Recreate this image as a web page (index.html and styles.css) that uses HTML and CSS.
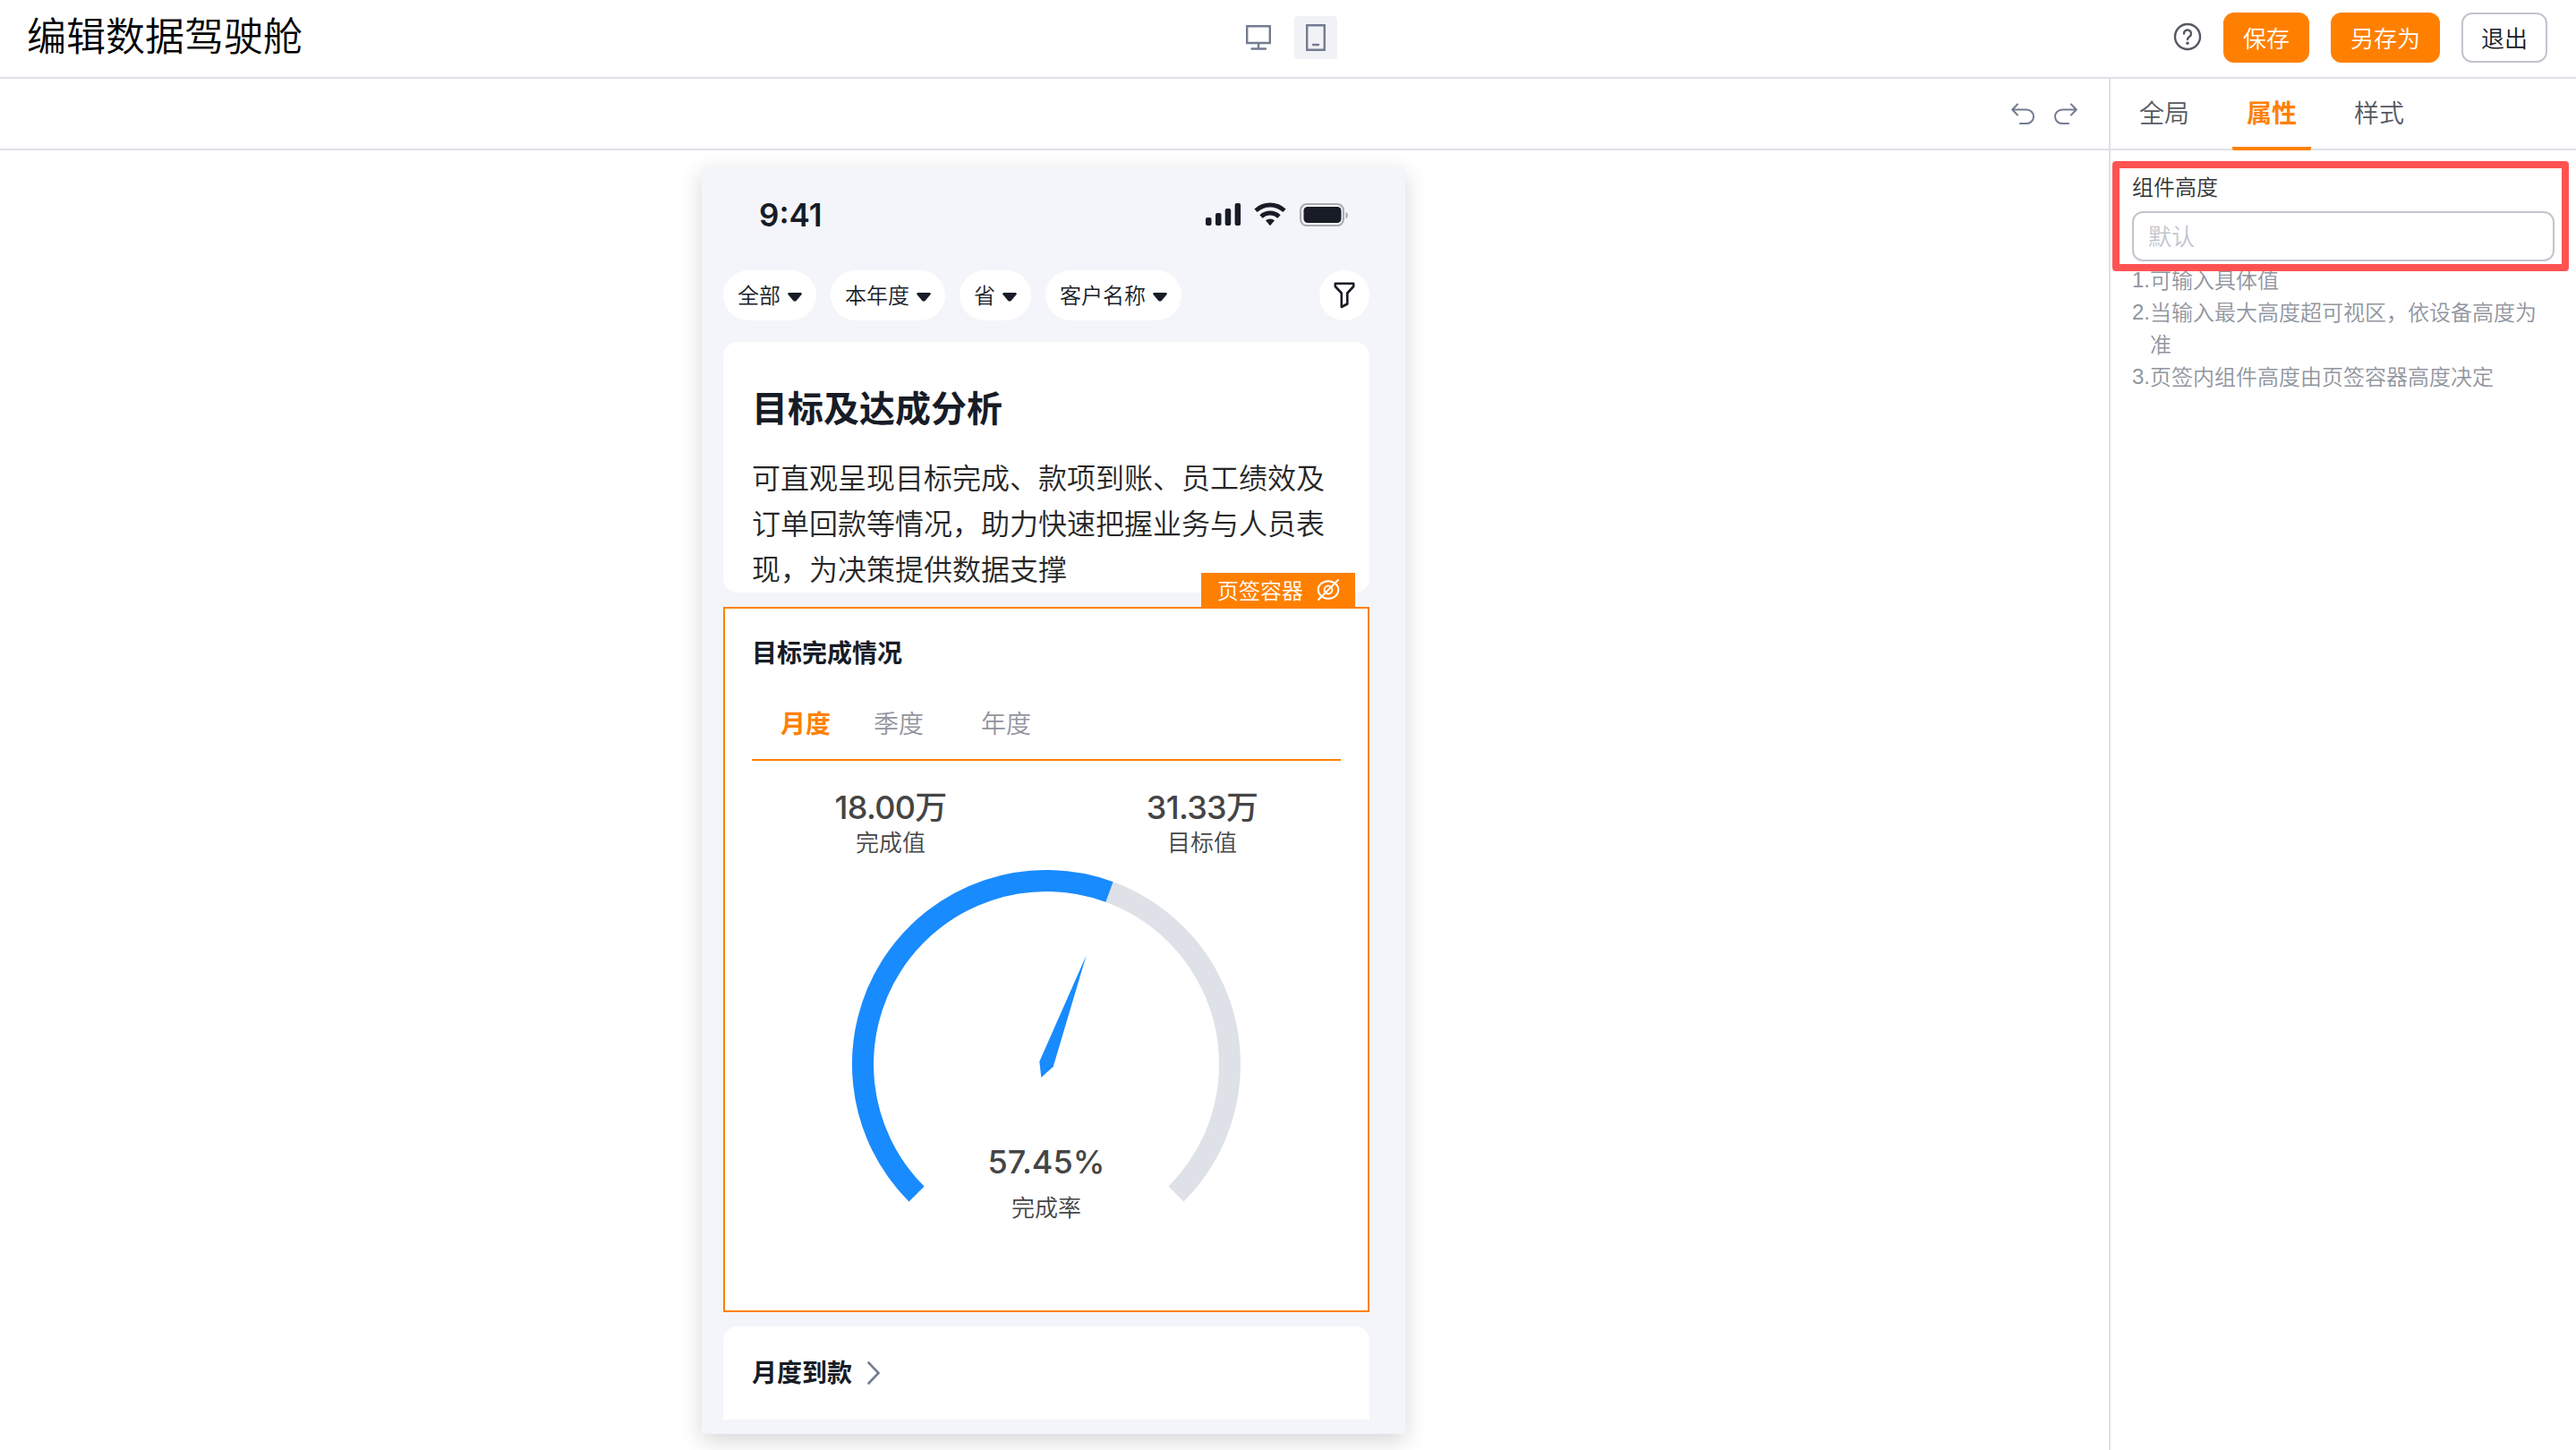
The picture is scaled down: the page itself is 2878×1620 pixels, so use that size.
FILE: index.html
```
<!DOCTYPE html>
<html lang="zh-CN">
<head>
<meta charset="UTF-8">
<title>编辑数据驾驶舱</title>
<link rel="stylesheet" href="styles.css">
</head>
<body>
<div class="header">
    <h1 class="title">编辑数据驾驶舱</h1>
    <div class="devices">
        <span class="device">
            <svg width="28" height="28" viewBox="0 0 28 28" fill="none" stroke="#737c91" stroke-width="2.4"><path d="M1.2 1.2H26.8V20H1.2ZM14 20V26M6.5 26.5H22" stroke-linecap="round"/></svg>
        </span>
        <span class="device on">
            <svg width="22" height="30" viewBox="0 0 22 30" fill="none" stroke="#737c91" stroke-width="2.4"><path d="M1.2 1.2H20.8V28.8H1.2Z"/><path d="M8 23H14" stroke-linecap="round"/></svg>
        </span>
    </div>
    <div class="actions">
        <svg class="help" width="32" height="32" viewBox="0 0 32 32" fill="none" stroke="#545861" stroke-width="2.4" stroke-linecap="round"><circle cx="16" cy="16" r="14"/><path d="M12 12.5a4 4 0 1 1 6.4 3.2c-1.6 1.1-2.4 1.8-2.4 3.3"/><circle cx="16" cy="23.2" r="1.7" fill="#545861" stroke="none"/></svg>
        <button class="btn primary">保存</button>
        <button class="btn primary">另存为</button>
        <button class="btn">退出</button>
    </div>
</div>
<div class="main">
    <div class="stage">
        <div class="toolbar">
            <svg width="26" height="24" viewBox="0 0 26 24" fill="none" stroke="#737c91" stroke-width="2" stroke-linecap="round" stroke-linejoin="round"><path d="M7 1.5L1.2 7.5L7 13.5M1.5 7.5H17a8 7.8 0 0 1 0 15.6H10"/></svg>
            <svg width="26" height="24" viewBox="0 0 26 24" fill="none" stroke="#737c91" stroke-width="2" stroke-linecap="round" stroke-linejoin="round"><path d="M19 1.5L24.8 7.5L19 13.5M24.5 7.5H9a8 7.8 0 0 0 0 15.6H16"/></svg>
        </div>
        <div class="canvas">
            <div class="phone">
                <div class="status">
                    <span class="time">9:41</span>
                    <svg width="162" height="28" viewBox="0 0 162 28" fill="#171c26">
                        <rect x="1" y="17" width="6.5" height="9" rx="2"/>
                        <rect x="12" y="12" width="6.5" height="14" rx="2"/>
                        <rect x="22.7" y="7" width="6.5" height="19" rx="2"/>
                        <rect x="33.6" y="1" width="6.5" height="25" rx="2"/>
                        <g fill="none" stroke="#171c26" stroke-width="4.8"><path d="M57 9.3a23.5 23.5 0 0 1 32 0"/><path d="M63 16a14.5 14.5 0 0 1 20 0"/></g>
                        <path d="M68 20.3a7.5 7.5 0 0 1 10 0L73 26.2Z"/>
                        <rect x="107" y="2" width="48" height="24" rx="7" fill="none" stroke="#a8abb2" stroke-width="2"/>
                        <rect x="110.5" y="5" width="42" height="18" rx="4.5"/>
                        <path d="M157.5 10.5v8a4.5 4.5 0 0 0 0-8z" fill="#a8abb2"/>
                    </svg>
                </div>
                <div class="filters">
                    <span class="pill">全部<i class="caret"></i></span>
                    <span class="pill">本年度<i class="caret"></i></span>
                    <span class="pill">省<i class="caret"></i></span>
                    <span class="pill">客户名称<i class="caret"></i></span>
                    <span class="funnel">
                        <svg width="24" height="30" viewBox="0 0 24 30" fill="none" stroke="#171c26" stroke-width="2.6" stroke-linejoin="round"><path d="M1.8 1.8H22.2V5L15.3 12.5V24.5L8.8 28V12.5L1.8 5Z"/></svg>
                    </span>
                </div>
                <div class="card intro">
                    <h2>目标及达成分析</h2>
                    <p>可直观呈现目标完成、款项到账、员工绩效及订单回款等情况，助力快速把握业务与人员表现，为决策提供数据支撑</p>
                </div>
                <div class="selected">
                    <div class="tag">页签容器
                        <svg width="26" height="26" viewBox="0 0 26 26" fill="none" stroke="#fff" stroke-width="2" stroke-linecap="round"><ellipse cx="13" cy="13" rx="11.3" ry="9.8"/><circle cx="13" cy="13" r="4.4"/><path d="M24 2L2 24"/></svg>
                    </div>
                    <h3>目标完成情况</h3>
                    <div class="periods">
                        <span class="on">月度</span>
                        <span>季度</span>
                        <span>年度</span>
                    </div>
                    <div class="values">
                        <div class="value"><b>18.00<em>万</em></b><span>完成值</span></div>
                        <div class="value"><b>31.33<em>万</em></b><span>目标值</span></div>
                    </div>
                    <div class="gauge">
                        <svg width="434" height="372" viewBox="0 0 434 372" fill="none" stroke-width="24">
                            <path d="M72.04 361.96A205 205 0 1 1 361.96 361.96" stroke="#dee1e8"/>
                            <path d="M72.04 361.96A205 205 0 0 1 287.45 24.49" stroke="#188bff"/>
                            <path d="M261.7 95.3L224.7 219.7L211.3 231.7L209.3 214Z" fill="#188bff" stroke="none"/>
                        </svg>
                        <div class="rate"><b>57.45%</b><span>完成率</span></div>
                    </div>
                </div>
                <div class="card next">
                    <h3>月度到款</h3>
                    <svg width="16" height="28" viewBox="0 0 16 28" fill="none" stroke="#737c91" stroke-width="2.6" stroke-linecap="round"><path d="M2.5 2.5L13.5 14L2.5 25.5"/></svg>
                </div>
            </div>
        </div>
    </div>
    <div class="panel">
        <div class="tabs">
            <span class="tab">全局</span>
            <span class="tab on">属性</span>
            <span class="tab">样式</span>
        </div>
        <div class="props">
            <div class="field">
                <label>组件高度</label>
                <input type="text" placeholder="默认">
            </div>
            <ul class="notes">
                <li><i>1.</i><span>可输入具体值</span></li>
                <li><i>2.</i><span>当输入最大高度超可视区，依设备高度为准</span></li>
                <li><i>3.</i><span>页签内组件高度由页签容器高度决定</span></li>
            </ul>
            <div class="mark"></div>
        </div>
    </div>
</div>
</body>
</html>
```
FILE: styles.css
```
* {
box-sizing: border-box;
}
body {
margin: 0;
width: 2878px;
height: 1620px;
overflow: hidden;
background: #fff;
color: #171c26;
font-family: "Noto Sans CJK SC", sans-serif;
font-weight: 350;
}
h1, h2, h3, p, ul {
margin: 0;
padding: 0;
}
i, em {
font-style: normal;
}
svg {
display: block;
flex: none;
}

/* header */
.header {
display: grid;
grid-template-columns: 1fr auto 1fr;
height: 88px;
padding: 0 32px 2px 30px;
border-bottom: 2px solid #dee1e6;
align-items: center;
}
.title {
font-size: 44px;
font-weight: 350;
line-height: 60px;
color: #000;
margin-top: -8px;
}
.devices {
display: flex;
gap: 16px;
margin: 0 1px 0 0;
}
.device {
display: flex;
width: 48px;
height: 48px;
border-radius: 4px;
align-items: center;
justify-content: center;
}
.device.on {
background: #f1f2f5;
}
.actions {
display: flex;
justify-content: flex-end;
align-items: center;
gap: 24px;
}
.help {
margin: -2px 0 0;
}
.btn {
height: 56px;
padding: 0 20px;
border: 2px solid #c1c5ce;
border-radius: 12px;
background: #fff;
color: #171c26;
font: 350 26px/48px "Noto Sans CJK SC", sans-serif;
width: 96px;
}
.btn.primary {
width: auto;
padding: 0 20px;
border-color: #ff8000;
background: #ff8000;
color: #fff;
}

/* left stage */
.main {
display: flex;
height: 1532px;
}
.stage {
flex: 1;
}
.toolbar {
display: flex;
height: 80px;
padding: 0 35px 0 0;
gap: 22px;
justify-content: flex-end;
align-items: center;
border-bottom: 2px solid #dee1e6;
}
.canvas {
display: flex;
justify-content: center;
padding: 18px 2px 0 0;
height: 1452px;
overflow: hidden;
}
.phone {
width: 786px;
height: 1416px;
padding: 0 40px 0 24px;
background: #f4f5fa;
box-shadow: 0 8px 24px rgba(0, 0, 0, 0.16);
}
.status {
display: flex;
justify-content: space-between;
align-items: center;
height: 108px;
padding: 0 22px 0 40px;
margin-bottom: 8px;
}
.time {
font: 600 35px/40px Inter, sans-serif;
}
.filters {
display: flex;
gap: 16px;
margin-bottom: 24px;
}
.pill {
display: flex;
align-items: center;
gap: 8px;
height: 56px;
padding: 0 16px 2px;
border-radius: 28px;
background: #fff;
font-size: 24px;
line-height: 50px;
}
.caret {
width: 16px;
height: 10px;
margin-top: 6px;
background: #171c26;
clip-path: polygon(6% 0, 94% 0, 100% 14%, 58% 95%, 42% 95%, 0 14%);
}
.funnel {
display: flex;
align-items: center;
justify-content: center;
width: 56px;
height: 56px;
margin-left: auto;
border-radius: 50%;
background: #fff;
}
.card {
background: #fff;
border-radius: 16px;
padding: 0 32px;
}
.intro {
height: 280px;
padding-top: 42px;
margin-bottom: 16px;
}
.intro h2 {
font-size: 40px;
font-weight: 600;
line-height: 60px;
margin-bottom: 23px;
}
.intro p {
font-size: 32px;
line-height: 51px;
color: #262626;
}

/* selected tab container */
.selected {
position: relative;
height: 788px;
padding: 28px 30px 0;
margin-bottom: 16px;
border: 2px solid #ff8000;
background: #fff;
}
.tag {
position: absolute;
right: 14px;
top: -40px;
display: flex;
align-items: center;
justify-content: space-between;
width: 172px;
height: 38px;
padding: 0 17px 0 18px;
background: #ff8000;
color: #fff;
font-size: 24px;
line-height: 34px;
}
h3 {
font-size: 28px;
font-weight: 600;
line-height: 40px;
}
.periods {
display: flex;
margin-top: 32px;
padding: 5px 32px 0;
height: 70px;
border-bottom: 2px solid #ff8000;
color: #91959e;
font-size: 28px;
line-height: 44px;
}
.periods span {
width: 120px;
}
.periods .on {
width: 104px;
color: #ff8000;
font-weight: 600;
}
.values {
display: flex;
margin: 0 -19px;
padding-top: 30px;
height: 122px;
color: #454545;
text-align: center;
}
.value {
flex: 1;
}
.values b, .rate b {
display: block;
font: 500 36px/44px Inter, "Noto Sans CJK SC", sans-serif;
}
.values b {
height: 42px;
letter-spacing: -0.7px;
}
.values span, .rate span {
display: block;
font-size: 26px;
line-height: 36px;
}
.gauge {
display: grid;
justify-items: center;
color: #454545;
}
.gauge svg, .rate {
grid-area: 1 / 1;
}
.rate {
padding-top: 304px;
text-align: center;
}
.rate span {
margin-top: 10px;
}
.next {
display: flex;
gap: 16px;
align-items: center;
height: 104px;
border-radius: 16px 16px 0 0;
}
.next h3 {
margin-top: -4px;
}

/* right panel */
.panel {
width: 522px;
border-left: 2px solid #dee1e6;
}
.tabs {
display: flex;
gap: 32px;
height: 80px;
padding: 0 16px;
border-bottom: 2px solid #dee1e6;
}
.tab {
height: 80px;
padding: 0 16px;
font-size: 28px;
line-height: 74px;
color: #545861;
}
.tab.on {
color: #ff8000;
font-weight: 600;
border-bottom: 4px solid #ff8000;
border-radius: 2px;
}
.props {
position: relative;
padding: 22px 24px;
}
.field label {
display: block;
font-size: 24px;
line-height: 36px;
margin-bottom: 10px;
color: #333;
}
.field input {
display: block;
width: 472px;
height: 56px;
padding: 0 16px 3px;
border: 2px solid #c1c5ce;
border-radius: 12px;
font: 350 26px "Noto Sans CJK SC", sans-serif;
outline: none;
}
.field input::placeholder {
color: #c1c5ce;
}
.notes {
margin-top: 2px;
list-style: none;
color: #91959e;
font-size: 24px;
line-height: 36px;
}
.notes li {
display: flex;
}
.notes i {
width: 20px;
padding-top: 2px;
line-height: 34px;
font-family: "Liberation Sans", sans-serif;
}
.notes span {
width: 436px;
}
/* highlight frame over the height field */
.mark {
position: absolute;
left: 2px;
top: 12px;
width: 510px;
height: 123px;
border: 8px solid #ff5252;
border-radius: 4px;
}
```
